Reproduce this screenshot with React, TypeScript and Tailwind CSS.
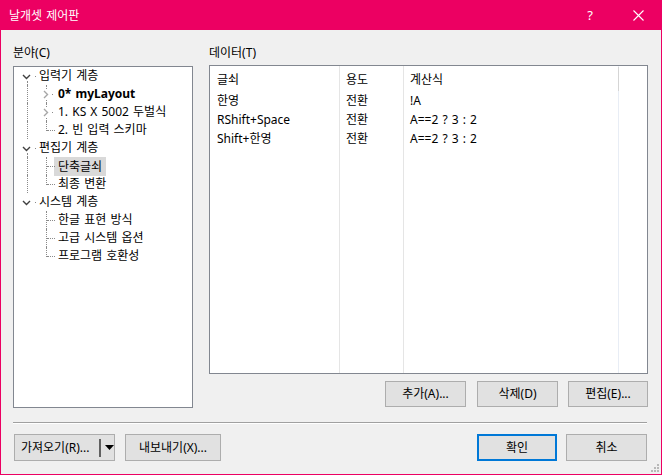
import React from 'react';

type Node = {
  label: string;
  level: 0 | 1;
  bold?: boolean;
  selected?: boolean;
  expander?: 'open' | 'closed';
  // root-level guide runs through this row
  rootLine?: 'full' | 'below' | 'none';
  // child-level guide shape
  childLine?: 'full' | 'end';
};

const tree: Node[] = [
  { label: '입력기 계층', level: 0, expander: 'open', rootLine: 'below' },
  { label: '0* myLayout', level: 1, bold: true, expander: 'closed', rootLine: 'full', childLine: 'full' },
  { label: '1. KS X 5002 두벌식', level: 1, expander: 'closed', rootLine: 'full', childLine: 'full' },
  { label: '2. 빈 입력 스키마', level: 1, rootLine: 'full', childLine: 'end' },
  { label: '편집기 계층', level: 0, expander: 'open', rootLine: 'below' },
  { label: '단축글쇠', level: 1, selected: true, rootLine: 'full', childLine: 'full' },
  { label: '최종 변환', level: 1, rootLine: 'full', childLine: 'end' },
  { label: '시스템 계층', level: 0, expander: 'open', rootLine: 'none' },
  { label: '한글 표현 방식', level: 1, rootLine: 'none', childLine: 'full' },
  { label: '고급 시스템 옵션', level: 1, rootLine: 'none', childLine: 'full' },
  { label: '프로그램 호환성', level: 1, rootLine: 'none', childLine: 'end' },
];

const rows = [
  { key: '한영', use: '전환', expr: '!A' },
  { key: 'RShift+Space', use: '전환', expr: 'A==2 ? 3 : 2' },
  { key: 'Shift+한영', use: '전환', expr: 'A==2 ? 3 : 2' },
];

function Chevron({ open }: { open: boolean }) {
  return open ? (
    <svg width="9" height="6" viewBox="0 0 9 6" className="block">
      <polyline points="1,1 4.5,4.5 8,1" fill="none" stroke="#404040" strokeWidth="1.4" />
    </svg>
  ) : (
    <svg width="6" height="9" viewBox="0 0 6 9" className="block">
      <polyline points="1,1 4.5,4.5 1,8" fill="none" stroke="#a6a6a6" strokeWidth="1.4" />
    </svg>
  );
}

function TreeRow({ node }: { node: Node }) {
  return (
    <div className="relative h-[18px] flex items-center">
      {/* root-level guide */}
      {node.rootLine === 'full' && (
        <span className="absolute left-[13px] top-0 h-full border-l border-dotted border-[#8a8a8a]" />
      )}
      {node.rootLine === 'below' && (
        <span className="absolute left-[13px] top-[14px] bottom-0 border-l border-dotted border-[#8a8a8a]" />
      )}
      {node.level === 0 ? (
        <>
          <span className="absolute left-[8px] top-[7px]">
            <Chevron open />
          </span>
          <span className="absolute left-[21px] top-[9px] w-[1px] h-[1px] bg-[#8a8a8a]" />
          <span className="pl-[25px]">{node.label}</span>
        </>
      ) : (
        <>
          <span
            className={
              node.childLine === 'end'
                ? 'absolute left-[32px] top-0 h-[10px] border-l border-dotted border-[#8a8a8a]'
                : 'absolute left-[32px] top-0 h-full border-l border-dotted border-[#8a8a8a]'
            }
          />
          {node.expander === 'closed' ? (
            <>
              <span className="absolute left-[29px] top-[5px] bg-white">
                <Chevron open={false} />
              </span>
              <span className="absolute left-[38px] top-[9px] w-[1px] h-[1px] bg-[#8a8a8a]" />
            </>
          ) : (
            <span className="absolute left-[33px] top-[9px] w-[8px] border-t border-dotted border-[#8a8a8a]" />
          )}
          <span
            className={
              node.selected
                ? 'ml-[40px] h-[19px] px-[4px] leading-[19px] bg-[#d9d9d9]'
                : 'ml-[40px] px-[4px]' + (node.bold ? ' font-bold' : '')
            }
          >
            {node.label}
          </span>
        </>
      )}
    </div>
  );
}

function Button({ children, className = '' }: { children: React.ReactNode; className?: string }) {
  return (
    <div
      className={
        'flex items-center justify-center bg-[#e1e1e1] border border-[#adadad] text-[12px] ' + className
      }
    >
      {children}
    </div>
  );
}

export default function App() {
  return (
    <div
      className="w-[662px] h-[475px] bg-[#f0f0f0] border border-[#ec0062] flex flex-col text-black text-[12px] relative"
      style={{ fontFamily: '"Noto Sans", "Noto Sans CJK KR", sans-serif', wordSpacing: '1px' }}
    >
      {/* title bar */}
      <div className="h-[29px] bg-[#ec0062] flex items-center text-white shrink-0">
        <span className="pl-[8px] pt-[1px] text-[12px]">날개셋 제어판</span>
        <span className="ml-auto mr-[40px] text-[13px]">?</span>
        <svg width="11" height="11" viewBox="0 0 11 11" className="mr-[17px]">
          <path d="M0.5 0.5 L10.5 10.5 M10.5 0.5 L0.5 10.5" stroke="#fff" strokeWidth="1.1" />
        </svg>
      </div>

      <div className="flex flex-col px-[12px]">
        <div className="flex">
          {/* left: tree */}
          <div className="w-[180px] flex flex-col">
            <div className="mt-[15px] h-[16px] leading-[16px]">분야(C)</div>
            <div className="mt-[5px] h-[342px] bg-white border border-[#828790]">
              {tree.map((n) => (
                <TreeRow key={n.label} node={n} />
              ))}
            </div>
          </div>

          {/* right: data list */}
          <div className="ml-[16px] w-[439px] flex flex-col">
            <div className="mt-[15px] h-[16px] leading-[16px]">데이터(T)</div>
            <div className="mt-[4px] h-[309px] bg-white border border-[#828790] flex">
              <div className="w-[130px] border-r border-[#e5e5e5] pt-[4px] pl-[7px]">
                <div className="h-[19px] leading-[19px] mb-[2px]">글쇠</div>
                {rows.map((r) => (
                  <div key={r.key} className="h-[19px] leading-[19px]">
                    {r.key}
                  </div>
                ))}
              </div>
              <div className="w-[64px] border-r border-[#e5e5e5] pt-[4px] pl-[6px]">
                <div className="h-[19px] leading-[19px] mb-[2px]">용도</div>
                {rows.map((r) => (
                  <div key={r.key} className="h-[19px] leading-[19px]">
                    {r.use}
                  </div>
                ))}
              </div>
              <div className="w-[215px] border-r border-[#e8edf5] pt-[4px] pl-[6px] relative">
                <span className="absolute right-[-1px] top-[1px] h-[24px] border-r border-[#d5d5d5]" />
                <div className="h-[19px] leading-[19px] mb-[2px]">계산식</div>
                {rows.map((r) => (
                  <div key={r.key} className="h-[19px] leading-[19px]">
                    {r.expr}
                  </div>
                ))}
              </div>
            </div>
            <div className="mt-[7px] flex justify-end gap-[1px]">
              <Button className="w-[81px] h-[26px] mr-[10px]">추가(A)...</Button>
              <Button className="w-[81px] h-[26px] mr-[9px]">삭제(D)</Button>
              <Button className="w-[80px] h-[26px]">편집(E)...</Button>
            </div>
          </div>
        </div>

        {/* separator */}
        <div className="mt-[14px] h-[2px] border-t border-[#a0a0a0] border-b border-b-white w-[634px]" />

        {/* bottom buttons */}
        <div className="mt-[10px] flex items-center">
          <div className="ml-[1px] w-[101px] h-[27px] bg-[#e1e1e1] border border-[#adadad] flex items-center">
            <span className="pl-[6px] w-[84px] whitespace-nowrap">가져오기(R)...</span>
            <span className="w-[2px] h-[18px] bg-[#606060]" />
            <svg width="9" height="5" viewBox="0 0 9 5" className="ml-[4px]">
              <polygon points="0,0 9,0 4.5,5" fill="#000" />
            </svg>
          </div>
          <Button className="ml-[10px] w-[96px] h-[27px]">내보내기(X)...</Button>
          <div className="ml-auto flex items-center">
            <div className="w-[80px] h-[27px] bg-[#e1e1e1] border-2 border-[#0078d7] flex items-center justify-center">
              확인
            </div>
            <Button className="ml-[9px] w-[81px] h-[27px] mr-[2px]">취소</Button>
          </div>
        </div>
      </div>

      {/* resize grip */}
      <svg width="9" height="9" viewBox="0 0 9 9" className="absolute right-[2px] bottom-[2px]">
        <rect x="7" y="1" width="2" height="2" fill="#b8b8b8" />
        <rect x="4" y="4" width="2" height="2" fill="#b8b8b8" />
        <rect x="7" y="4" width="2" height="2" fill="#b8b8b8" />
        <rect x="1" y="7" width="2" height="2" fill="#b8b8b8" />
        <rect x="4" y="7" width="2" height="2" fill="#b8b8b8" />
        <rect x="7" y="7" width="2" height="2" fill="#b8b8b8" />
      </svg>
    </div>
  );
}
